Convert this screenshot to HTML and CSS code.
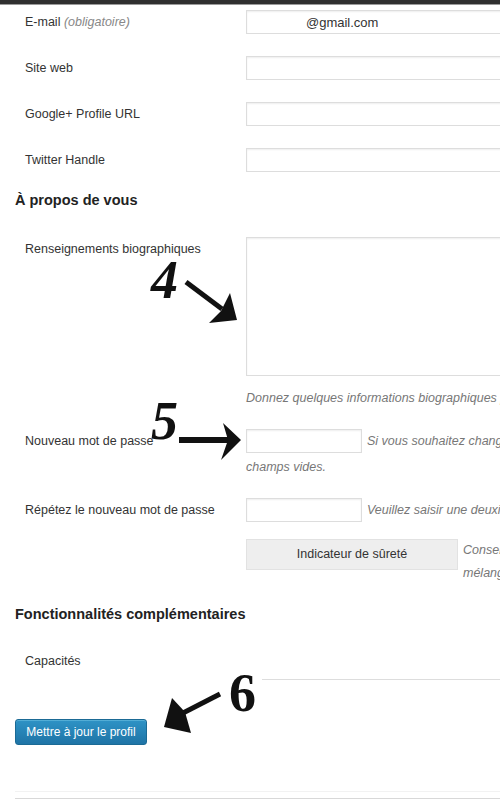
FILE: index.html
```html
<!DOCTYPE html>
<html lang="fr">
<head>
    <meta charset="UTF-8">
    <meta name="viewport" content="width=device-width, initial-scale=1.0">
    <title>Profil</title>
    <link rel="stylesheet" href="styles.css">
</head>
<body>
    <div class="topbar"></div>

    <div class="page">
        <!-- Contact -->
        <div class="row first">
            <label class="label">E-mail <span class="req">(obligatoire)</span></label>
            <div class="field"><input type="text" class="text email" value="@gmail.com"></div>
        </div>
        <div class="row">
            <label class="label">Site web</label>
            <div class="field"><input type="text" class="text"></div>
        </div>
        <div class="row">
            <label class="label">Google+ Profile URL</label>
            <div class="field"><input type="text" class="text"></div>
        </div>
        <div class="row">
            <label class="label">Twitter Handle</label>
            <div class="field"><input type="text" class="text"></div>
        </div>

        <!-- A propos -->
        <h3 class="section about">À propos de vous</h3>
        <div class="row">
            <label class="label">Renseignements biographiques</label>
            <div class="field">
                <textarea class="bio"></textarea>
                <p class="desc">Donnez quelques informations biographiques pour compléter votre profil. Ceci peut être rendu public.</p>
            </div>
        </div>
        <div class="row pass">
            <label class="label">Nouveau mot de passe</label>
            <div class="field lines">
                <div class="inline">
                    <input type="password" class="short"><span class="desc">Si vous souhaitez changer votre mot de passe, tapez-en un nouveau. Sinon, laissez ces</span>
                </div>
                <div class="desc more">champs vides.</div>
            </div>
        </div>
        <div class="row">
            <label class="label">Répétez le nouveau mot de passe</label>
            <div class="field lines">
                <div class="inline">
                    <input type="password" class="short"><span class="desc">Veuillez saisir une deuxième fois votre nouveau mot de passe.</span>
                </div>
            </div>
        </div>
        <div class="row strength">
            <div class="label"></div>
            <div class="field">
                <div class="meter">Indicateur de sûreté</div>
                <p class="desc hint">Conseil : votre mot de passe devrait faire au moins sept caractères. Pour le rendre plus sûr, utilisez un<br>mélange de majuscules, de minuscules, de chiffres et de symboles tels que ! " ? $ % ^ &amp; ).</p>
            </div>
        </div>

        <!-- Fonctionnalites -->
        <h3 class="section extra">Fonctionnalités complémentaires</h3>
        <div class="row caps">
            <label class="label">Capacités</label>
            <div class="field"></div>
        </div>
        <div class="rule"></div>

        <button class="submit">Mettre à jour le profil</button>

        <div class="foot-light"></div>
        <div class="foot"></div>
    </div>

    <!-- Annotations -->
    <span class="num n4">4</span>
    <span class="num n5">5</span>
    <span class="num n6">6</span>
    <svg class="marks" width="500" height="800" viewBox="0 0 500 800">
        <line x1="186" y1="282" x2="222" y2="309" stroke="#111" stroke-width="5"/>
        <polygon points="230,293 237,320 209,323 221,311" fill="#111"/>
        <rect x="179" y="437" width="50" height="6" fill="#111"/>
        <polygon points="223,423 241,440 221,460 228,440" fill="#111"/>
        <line x1="220" y1="694" x2="183" y2="713" stroke="#111" stroke-width="5"/>
        <polygon points="172,698 185,712 191,733 164,727" fill="#111"/>
    </svg>
</body>
</html>
```

FILE: styles.css
```css
/* Global */
body {
    margin: 0;
    width: 500px;
    height: 800px;
    overflow: hidden;
    position: relative;
    background: #fff;
    font-family: 'Liberation Sans', Arial, sans-serif;
    font-size: 12.5px;
    color: #333;
}

.topbar {
    height: 4px;
    background: #2f2f2f;
    border-bottom: 1px solid #9a9a9a;
}

.page {
    padding-left: 15px;
    width: 900px;
}

.row {
    display: flex;
    padding: 11px 0;
}

.row.first {
    padding-top: 5px;
}

.label {
    flex: none;
    width: 231px;
    padding-left: 10px;
    box-sizing: border-box;
    line-height: 24px;
}

.req {
    font-style: italic;
    color: #888;
}

.field {
    width: 640px;
}

.text, .short, .bio {
    font-family: inherit;
    font-size: 13px;
    color: #333;
    border: 1px solid #ddd;
    box-shadow: inset 0 1px 2px rgba(0, 0, 0, 0.07);
    background: #fff;
    box-sizing: border-box;
    margin: 0;
    outline: none;
}

.text {
    display: block;
    width: 330px;
    height: 24px;
    padding: 2px 5px;
}

.email {
    text-indent: 54px;
}

.bio {
    display: block;
    width: 330px;
    height: 139px;
    resize: none;
}

.desc {
    font-style: italic;
    color: #777;
    white-space: nowrap;
}

p.desc {
    margin: 13px 0 0;
    line-height: 18px;
}

.inline {
    display: flex;
    align-items: center;
    height: 24px;
    line-height: 24px;
}

.short {
    flex: none;
    width: 116px;
    height: 24px;
    margin-right: 5px;
}

.more {
    line-height: 28px;
}

.row.pass {
    padding-bottom: 6px;
}

.row.strength {
    padding: 6px 0 0;
}

.meter {
    float: left;
    width: 212px;
    height: 31px;
    line-height: 29px;
    box-sizing: border-box;
    background: #eee;
    border: 1px solid #e2e2e2;
    text-align: center;
    margin-right: 5px;
}

p.hint {
    margin: 0;
    line-height: 23px;
}

.section {
    font-size: 14.5px;
    font-weight: bold;
    color: #222;
    line-height: 18px;
    margin: 0;
}

.section.about {
    margin: 8px 0 17px;
}

.section.extra {
    margin: 20px 0 15px;
}

.row.caps {
    padding-bottom: 6px;
}

.rule {
    margin-left: 247px;
    height: 1px;
    background: #ddd;
}

.submit {
    display: block;
    margin-top: 39px;
    width: 132px;
    height: 26px;
    padding: 0;
    border: 1px solid #1b6a95;
    border-radius: 3px;
    background: linear-gradient(#2e93c6, #1f74a6);
    color: #fff;
    font-family: inherit;
    font-size: 12px;
    box-shadow: inset 0 1px 0 rgba(120, 200, 230, 0.5);
}

.foot-light {
    margin-top: 46px;
    height: 1px;
    background: #f2f2f2;
}

.foot {
    margin-top: 6px;
    height: 1px;
    background: #d8d8d8;
}

/* Annotations */
.num {
    position: absolute;
    font-family: 'Liberation Serif', 'Times New Roman', serif;
    font-weight: bold;
    font-style: italic;
    font-size: 54px;
    line-height: 40px;
    color: #111;
}

.n4 { left: 151px; top: 260px; }
.n5 { left: 151px; top: 401px; }
.n6 { left: 229px; top: 673px; font-style: normal; }

.marks {
    position: absolute;
    left: 0;
    top: 0;
    pointer-events: none;
}
```
